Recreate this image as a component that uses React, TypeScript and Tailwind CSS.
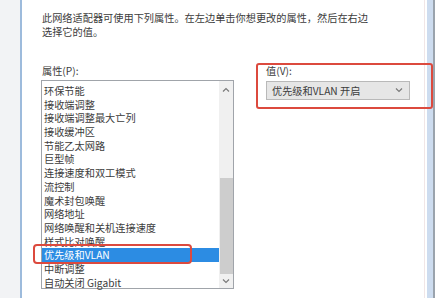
const ITEMS = [
  "环保节能",
  "接收端调整",
  "接收端调整最大亡列",
  "接收缓冲区",
  "节能乙太网路",
  "巨型帧",
  "连接速度和双工模式",
  "流控制",
  "魔术封包唤醒",
  "网络地址",
  "网络唤醒和关机连接速度",
  "样式比对唤醒",
  "优先级和VLAN",
  "中断调整",
  "自动关闭 Gigabit",
];

const SELECTED = 12;

function Chevron({ up }: { up?: boolean }) {
  return (
    <svg width="8" height="5" viewBox="0 0 8 5" className="shrink-0">
      <path
        d={up ? "M1 4.5 L4 1.5 L7 4.5" : "M1 0.5 L4 3.5 L7 0.5"}
        fill="none"
        stroke="#7a7a7a"
        strokeWidth="1.2"
      />
    </svg>
  );
}

export default function App() {
  return (
    <div
      className="relative flex h-[298px] w-[435px] overflow-hidden bg-white text-[10.2px] text-[#3c3c3c]"
      style={{ fontFamily: '"Noto Sans CJK SC", "Noto Sans", sans-serif' }}
    >
      {/* window frame, left */}
      <div className="w-[20px] shrink-0 bg-[#f2f3f5]" />
      <div className="w-[2px] shrink-0 bg-[#9dbbdc]" />

      {/* dialog body */}
      <div className="flex min-w-0 flex-1 flex-col pl-[19px] pt-[11px]">
        <p className="pl-[1px] leading-[14px]">
          此网络适配器可使用下列属性。在左边单击你想更改的属性，然后在右边
          <br />
          选择它的值。
        </p>

        <div className="mt-[25px] flex gap-[32px]">
          {/* properties */}
          <div className="flex w-[193px] shrink-0 flex-col">
            <div className="pl-[1px] leading-[14px]">属性(P):</div>
            <div className="mt-[2px] flex h-[209px] border border-[#a0a4aa] bg-white">
              <div className="flex min-w-0 flex-1 flex-col pt-[3px]">
                {ITEMS.map((it, i) => (
                  <div
                    key={it}
                    className={
                      i === SELECTED
                        ? "h-[13.7px] whitespace-nowrap bg-[#2c8ce3] pl-[2px] leading-[13.7px] text-white"
                        : "h-[13.7px] whitespace-nowrap pl-[2px] leading-[13.7px]"
                    }
                  >
                    {it}
                  </div>
                ))}
              </div>
              {/* scrollbar */}
              <div className="flex w-[14px] shrink-0 flex-col items-center bg-[#f0f0f0]">
                <div className="flex h-[16px] items-center">
                  <Chevron up />
                </div>
                <div className="mt-[81px] h-[96px] w-[13px] bg-[#cdcdcd]" />
                <div className="flex flex-1 items-center">
                  <Chevron />
                </div>
              </div>
            </div>
          </div>

          {/* value */}
          <div className="flex w-[144px] shrink-0 flex-col">
            <div className="leading-[14px]">值(V):</div>
            <div className="mt-[3px] flex h-[19px] items-center justify-between border border-[#b9b9b9] bg-[#e6e6e6] pl-[5px] pr-[6px]">
              <span className="whitespace-nowrap">优先级和VLAN 开启</span>
              <Chevron />
            </div>
          </div>
        </div>
      </div>

      {/* window frame, right */}
      <div className="w-[1px] shrink-0 bg-[#f1e6e6]" />
      <div className="w-[2px] shrink-0 bg-white" />
      <div className="w-[6px] shrink-0 bg-[#cddcef]" />
      <div className="w-[2px] shrink-0 bg-[#9aa3ad]" />

      {/* red annotations */}
      <div className="absolute left-[256px] top-[63px] h-[46px] w-[177px] rounded-[3px] border-2 border-[#dc4a3e]" />
      <div className="absolute left-[33px] top-[244px] h-[20px] w-[159px] rounded-[4px] border-2 border-[#dc4a3e]" />
    </div>
  );
}
